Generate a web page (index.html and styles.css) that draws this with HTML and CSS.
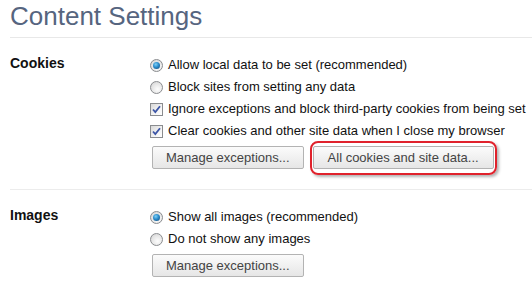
FILE: index.html
```html
<!DOCTYPE html>
<html lang="en">

<head>
    <meta charset="UTF-8" />
    <title>Content Settings</title>
    <link rel="stylesheet" href="styles.css">
</head>

<body>
    <div class="page">
        <h1 class="title">Content Settings</h1>

        <!-- Cookies -->
        <section class="group">
            <div class="group-label">Cookies</div>
            <div class="group-body">
                <label class="option"><span class="radio checked"></span>Allow local data to be set (recommended)</label>
                <label class="option"><span class="radio"></span>Block sites from setting any data</label>
                <label class="option"><span class="check"><svg width="11" height="11" viewBox="0 0 11 11"><path d="M2 5.5 L4.3 8 L9 2.2" fill="none" stroke="#3c55a6" stroke-width="1.8" /></svg></span>Ignore exceptions and block third-party cookies from being set</label>
                <label class="option"><span class="check"><svg width="11" height="11" viewBox="0 0 11 11"><path d="M2 5.5 L4.3 8 L9 2.2" fill="none" stroke="#3c55a6" stroke-width="1.8" /></svg></span>Clear cookies and other site data when I close my browser</label>
                <div class="buttons">
                    <button class="btn">Manage exceptions...</button>
                    <span class="highlight"><button class="btn wide">All cookies and site data...</button></span>
                </div>
            </div>
        </section>

        <!-- Images -->
        <section class="group last">
            <div class="group-label">Images</div>
            <div class="group-body">
                <label class="option"><span class="radio checked"></span>Show all images (recommended)</label>
                <label class="option"><span class="radio"></span>Do not show any images</label>
                <div class="buttons">
                    <button class="btn">Manage exceptions...</button>
                </div>
            </div>
        </section>
    </div>
</body>

</html>
```

FILE: styles.css
```css
* {
    margin: 0;
    padding: 0;
    box-sizing: border-box;
}

body {
    font-family: "Liberation Sans", Arial, sans-serif;
    font-size: 13px;
    color: #111;
    background: #fff;
    overflow: hidden;
}

.page {
    padding-left: 10px;
}

.title {
    height: 38px;
    padding-top: 1px;
    font-size: 26px;
    font-weight: normal;
    line-height: 30px;
    color: #56657f;
    border-bottom: 1px solid #e8e8e8;
}

.group {
    display: flex;
    padding: 16px 0 20px;
    border-bottom: 1px solid #ececec;
}

.group.last {
    padding-bottom: 0;
    border-bottom: none;
}

.group-label {
    flex-shrink: 0;
    width: 139px;
    font-size: 14px;
    font-weight: bold;
    line-height: 18px;
}

.group-body {
    flex: 1;
    min-width: 0;
}

.option {
    display: flex;
    align-items: center;
    gap: 5px;
    height: 22px;
    line-height: 22px;
    white-space: nowrap;
}

.radio {
    position: relative;
    flex-shrink: 0;
    width: 13px;
    height: 13px;
    margin-left: 1px;
    border: 1px solid #8a8c8f;
    border-radius: 50%;
    background: radial-gradient(circle at 60% 65%, #fdfdfd 0, #e6e6e6 55%, #cfcfcf 100%);
}

.radio.checked::after {
    content: "";
    position: absolute;
    top: 2px;
    left: 2px;
    width: 7px;
    height: 7px;
    border-radius: 50%;
    background: radial-gradient(circle at 40% 35%, #7fd0f5 0, #2a8ccc 45%, #12406b 100%);
}

.check {
    display: flex;
    flex-shrink: 0;
    align-items: center;
    justify-content: center;
    width: 13px;
    height: 13px;
    margin-left: 1px;
    border: 1px solid #8a8c8f;
    background: linear-gradient(135deg, #d8d8d8 0, #f4f4f4 60%, #fff 100%);
}

.buttons {
    display: flex;
    gap: 9px;
    margin: 4px 0 0 3px;
}

.btn {
    height: 23px;
    padding: 0 13px;
    font-family: "Liberation Sans", Arial, sans-serif;
    font-size: 13px;
    color: #444;
    border: 1px solid #b3b3b3;
    border-radius: 2px;
    background: linear-gradient(#fbfbfb, #e6e6e6);
}

.btn.wide {
    padding: 0 14px;
}

.highlight {
    position: relative;
    display: flex;
}

.highlight::after {
    content: "";
    position: absolute;
    top: -5px;
    left: -3px;
    right: -3px;
    bottom: -6px;
    border: 2px solid #e0222c;
    border-radius: 8px;
    box-shadow: 2px 2px 3px rgba(0, 0, 0, 0.3);
}
```
